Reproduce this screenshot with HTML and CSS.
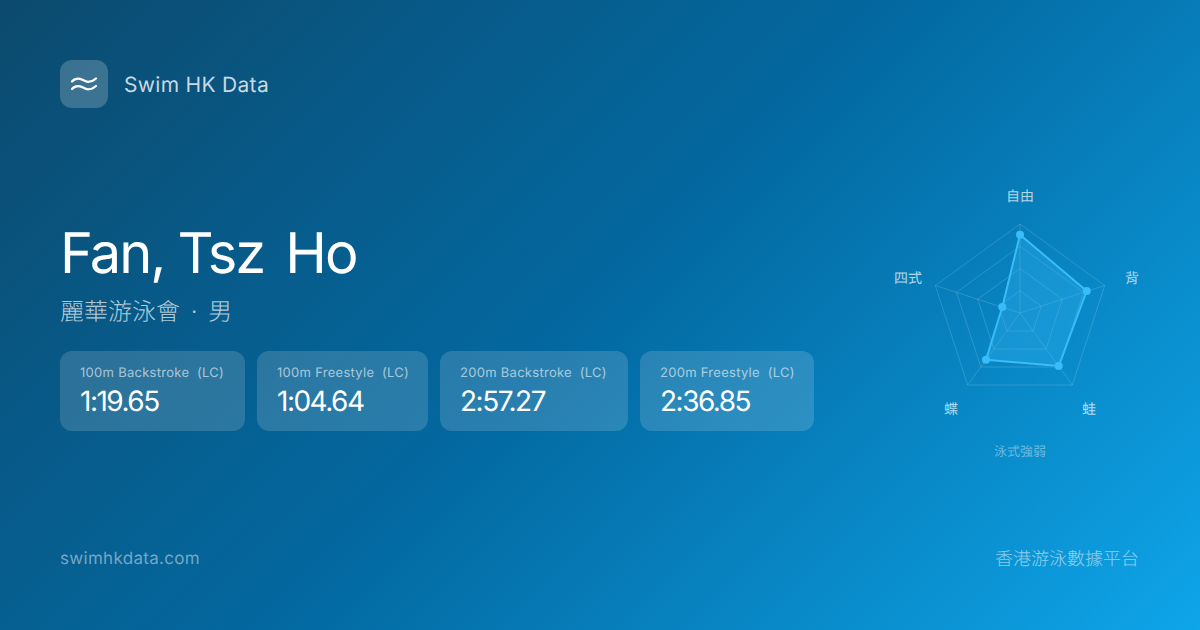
FILE: index.html
```html
<!DOCTYPE html>
<html lang="zh-Hant">
<head>
<meta charset="utf-8">
<title>Swim HK Data</title>
<link rel="stylesheet" href="styles.css">
</head>
<body>
<div class="card">
  <header class="brand">
    <div class="logo">
      <svg width="28" height="28" viewBox="0 0 28 28" fill="none" stroke="#fff" stroke-width="2.2" stroke-linecap="round">
        <path d="M2 11.500C4 9.200 7 8.200 10 8.800S15 11.800 18 11.800 23.500 10.800 26 8.500"/>
        <path d="M2 19C4 16.700 7 15.700 10 16.300S15 19.300 18 19.300 23.500 18.300 26 16"/>
      </svg>
    </div>
    <span class="brand-name">Swim HK Data</span>
  </header>
  <main class="main">
    <section class="info">
      <h1 class="name">Fan, Tsz <span class="name-last">Ho</span></h1>
      <p class="club">麗華游泳會 <span class="dot">·</span> 男</p>
      <div class="chips">
        <div class="chip"><div class="chip-label">100m Backstroke <span class="course">(LC)</span></div><div class="chip-value">1:19.65</div></div>
        <div class="chip"><div class="chip-label">100m Freestyle <span class="course">(LC)</span></div><div class="chip-value">1:04.64</div></div>
        <div class="chip"><div class="chip-label">200m Backstroke <span class="course">(LC)</span></div><div class="chip-value">2:57.27</div></div>
        <div class="chip"><div class="chip-label">200m Freestyle <span class="course">(LC)</span></div><div class="chip-value">2:36.85</div></div>
      </div>
    </section>
    <svg class="radar" width="260" height="300" viewBox="880 177 260 300">
      <g class="grid">
        <polygon points="1020,224 1104.700,285.500 1072.300,385 967.700,385 935.300,285.500"/>
        <polygon points="1020,246.200 1083.500,292.400 1059.200,367 980.800,367 956.500,292.400"/>
        <polygon points="1020,268.500 1062.300,299.200 1046.100,349 993.900,349 977.700,299.200"/>
        <polygon points="1020,290.700 1041.200,306.100 1033.100,331 1006.900,331 998.800,306.100"/>
        <path d="M1020 313V224M1020 313L1104.700 285.500M1020 313L1072.300 385M1020 313L967.700 385M1020 313L935.300 285.500"/>
      </g>
      <polygon class="area" points="1020,234.700 1086.700,291 1058.700,366 986,359.700 1002.300,307"/>
      <g class="dots">
        <circle cx="1020" cy="234.700" r="4"/>
        <circle cx="1086.700" cy="291" r="4"/>
        <circle cx="1058.700" cy="366" r="4"/>
        <circle cx="986" cy="359.700" r="4"/>
        <circle cx="1002.300" cy="307" r="4"/>
      </g>
      <g class="axis">
        <text x="1020" y="201" text-anchor="middle">自由</text>
        <text x="1132" y="283" text-anchor="middle">背</text>
        <text x="1089" y="414" text-anchor="middle">蛙</text>
        <text x="951" y="414" text-anchor="middle">蝶</text>
        <text x="908" y="283" text-anchor="middle">四式</text>
      </g>
      <text class="caption" x="1020" y="456" text-anchor="middle">泳式強弱</text>
    </svg>
  </main>
  <footer class="foot">
    <span class="site">swimhkdata.com</span>
    <span class="tag">香港游泳數據平台</span>
  </footer>
</div>
</body>
</html>
```

FILE: styles.css
```css
* { box-sizing: border-box; }
html, body { margin: 0; padding: 0; }
body {
  width: 1200px;
  height: 630px;
  overflow: hidden;
  font-family: Inter, "Noto Sans CJK TC", sans-serif;
  text-rendering: geometricPrecision;
}
.card {
  width: 1200px;
  height: 630px;
  padding: 60px;
  display: flex;
  flex-direction: column;
  background: linear-gradient(135deg, #0c4a6e 0%, #0369a1 50%, #0ea5e9 100%);
  color: #fff;
}
.brand { display: flex; align-items: center; gap: 16px; height: 48px; }
.logo {
  width: 48px;
  height: 48px;
  border-radius: 12px;
  background: rgba(255, 255, 255, 0.2);
  display: flex;
  align-items: center;
  justify-content: center;
}
.brand-name { padding-top: 2px; font-size: 21px; color: rgba(255, 255, 255, 0.78); letter-spacing: 0.3px; }
.main { flex: 1; display: flex; align-items: center; justify-content: space-between; }
.name { margin: 0; font-size: 56px; font-weight: 400; line-height: 60px; letter-spacing: -2px; word-spacing: -0.5px; }
.name-last { margin-left: 8px; }
.club { margin: 13px 0 23px; font-size: 24px; font-weight: 300; line-height: 32px; color: rgba(255, 255, 255, 0.7); }
.dot { margin: 0 4px; }
.chips { display: grid; grid-template-columns: 185px 171px 188px 174px; gap: 12px; }
.chip { padding: 13px 0 11px 20px; height: 80px; border-radius: 12px; background: rgba(255, 255, 255, 0.15); white-space: nowrap; }
.chip-label { font-size: 13px; line-height: 18px; letter-spacing: 0.28px; color: rgba(255, 255, 255, 0.6); }
.course { margin-left: 3.8px; }
.chip-value { margin-top: 2px; font-size: 28px; line-height: 34px; font-weight: 400; letter-spacing: -1.5px; }
.grid polygon, .grid path { fill: none; stroke: rgba(255, 255, 255, 0.15); stroke-width: 1; }
.area { fill: rgba(56, 189, 248, 0.3); stroke: #38bdf8; stroke-width: 2; stroke-linejoin: round; }
.dots circle { fill: #38bdf8; }
.axis text { font-size: 14px; fill: rgba(255, 255, 255, 0.7); }
.caption { font-size: 13px; fill: rgba(255, 255, 255, 0.4); }
.foot { display: flex; justify-content: space-between; align-items: center; height: 24px; }
.site { padding-top: 2px; font-size: 17px; letter-spacing: 0.3px; color: rgba(255, 255, 255, 0.45); }
.tag { margin-right: 1px; font-size: 18px; font-weight: 300; color: rgba(255, 255, 255, 0.55); }
```
